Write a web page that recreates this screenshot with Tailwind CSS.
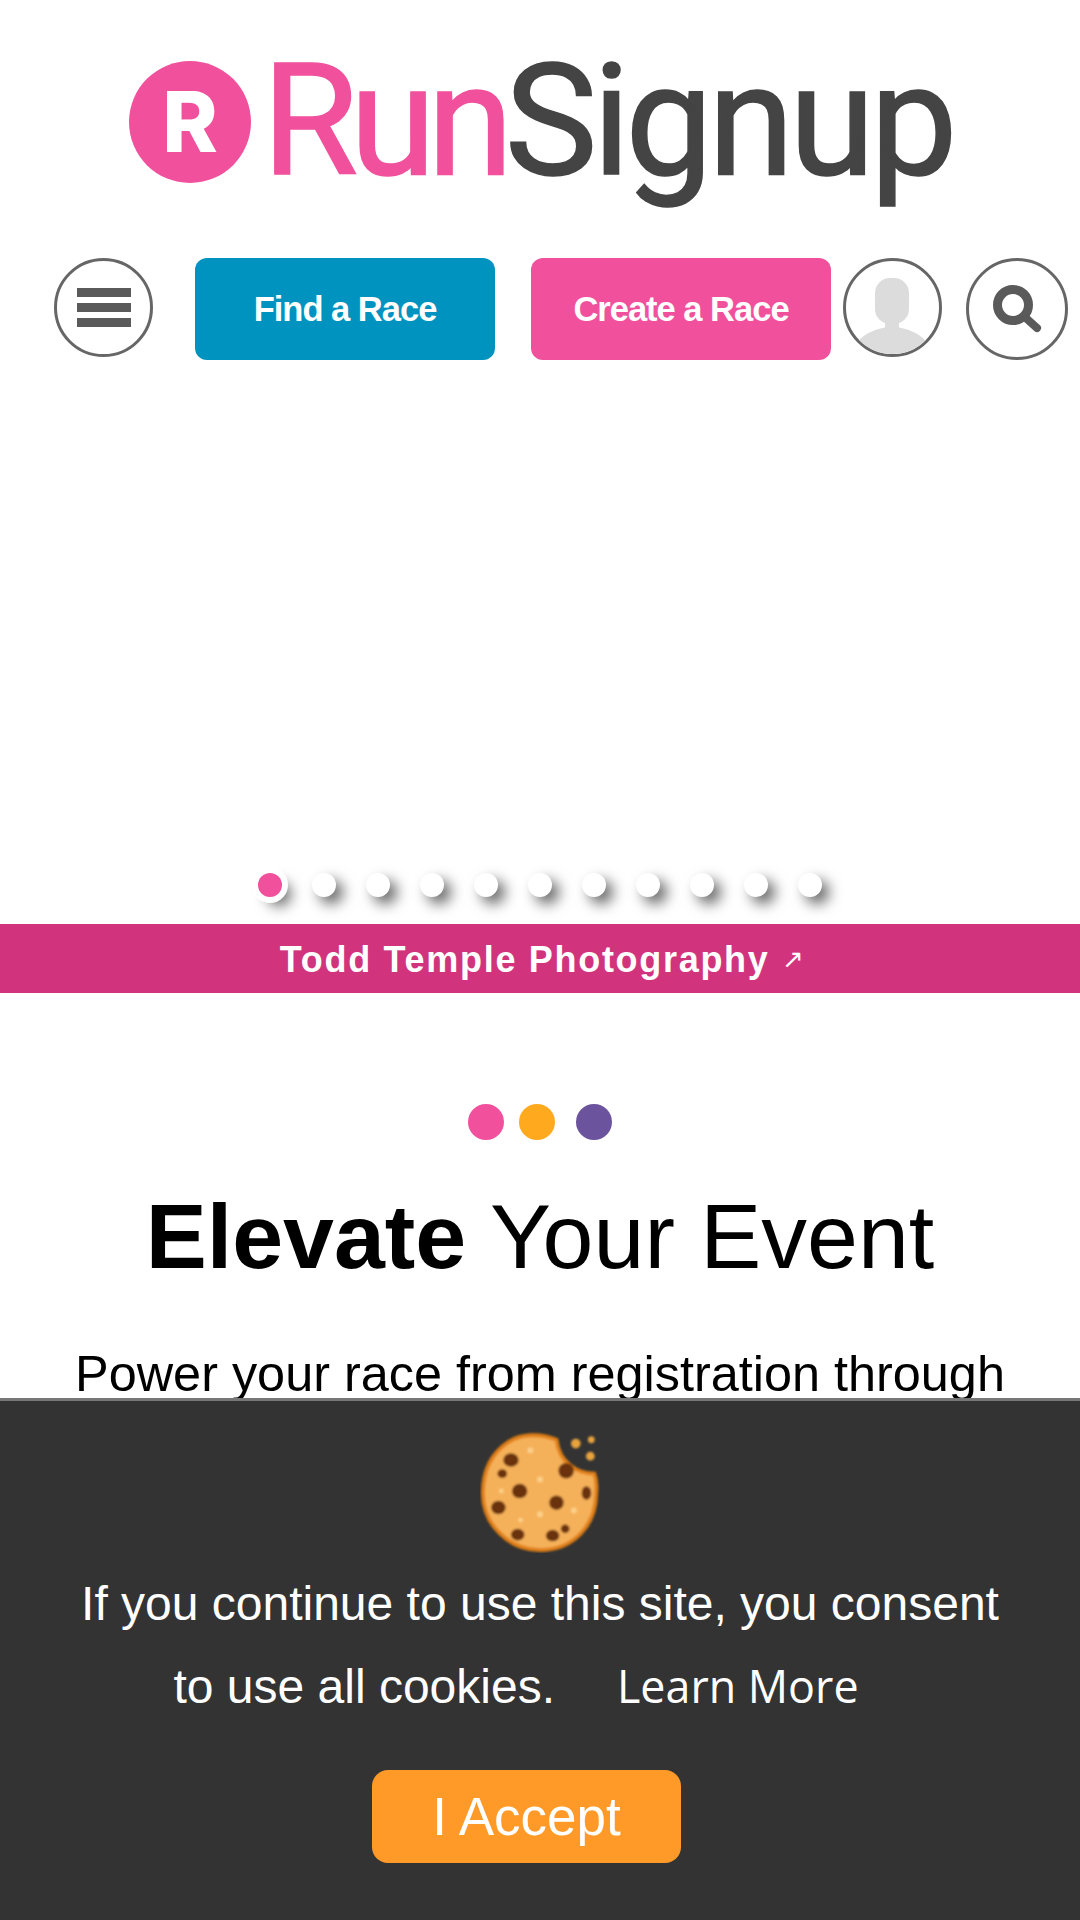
<!doctype html>
<html>
  <head>
    <meta charset="UTF-8" />
    <meta name="viewport" content="width=device-width, initial-scale=1.0" />
    <script src="https://cdn.jsdelivr.net/npm/@tailwindcss/browser@4"></script>
  </head>

  <body class="bg-white font-['Liberation_Sans',Arial,sans-serif]">
    <div class="relative h-[1920px] w-[1080px] overflow-hidden">
      <!-- Logo -->
      <div class="flex h-[258px] items-start pl-[129px] pt-[61px]">
        <div class="flex h-[122px] w-[122px] flex-none items-center justify-center rounded-full bg-[#f1519c]">
          <span class="font-['Inter',sans-serif] text-[84px] leading-none font-extrabold text-white">R</span>
        </div>
        <div class="mt-[-35px] ml-[11px] font-['Roboto',sans-serif] text-[156px] leading-[190px] font-normal [-webkit-text-stroke:1.5px]">
          <span class="tracking-[-8.5px] text-[#f1519c]">Run</span><span class="tracking-[-5px] text-[#444444]">Signup</span>
        </div>
      </div>

      <!-- Nav row -->
      <div class="flex h-[102px] items-start pl-[54px]">
        <button class="flex h-[99px] w-[99px] flex-none flex-col items-center justify-center gap-[6px] rounded-full border-[3px] border-[#666666]">
          <span class="h-[9px] w-[54px] bg-[#5a5a5a]"></span>
          <span class="h-[9px] w-[54px] bg-[#5a5a5a]"></span>
          <span class="h-[9px] w-[54px] bg-[#5a5a5a]"></span>
        </button>
        <button class="ml-[42px] h-[102px] w-[300px] flex-none rounded-[12px] bg-[#0093bf] pt-[2px] text-[34.5px] font-bold tracking-[-1px] text-white">Find a Race</button>
        <button class="ml-[36px] h-[102px] w-[300px] flex-none rounded-[12px] bg-[#f1519c] pt-[2px] text-[34.5px] font-bold tracking-[-1px] text-white">Create a Race</button>
        <button class="ml-[12px] h-[99px] w-[99px] flex-none overflow-hidden rounded-full border-[3px] border-[#666666]">
          <svg viewBox="0 0 93 93" class="h-full w-full">
            <rect x="29" y="17" width="34" height="46" rx="15" fill="#dcdcdc" />
            <rect x="39" y="58" width="14" height="12" fill="#dcdcdc" />
            <ellipse cx="46" cy="104" rx="44" ry="38" fill="#dcdcdc" />
          </svg>
        </button>
        <button class="ml-[24px] h-[102px] w-[102px] flex-none rounded-full border-[3px] border-[#666666]">
          <svg viewBox="0 0 96 96" class="h-full w-full">
            <circle cx="44" cy="44" r="15.5" fill="none" stroke="#5a5a5a" stroke-width="9" />
            <path d="M58 58 L68 67" stroke="#5a5a5a" stroke-width="8" stroke-linecap="round" />
          </svg>
        </button>
      </div>

      <!-- Slider dots -->
      <div class="flex h-[564px] items-end justify-center pb-[27px]">
        <div class="flex items-center gap-[30px]">
          <span class="h-[24px] w-[24px] rounded-full bg-[#f1519c] ring-[6px] ring-white shadow-[9px_9px_14px_rgba(0,0,0,0.6)]"></span>
          <span class="h-[24px] w-[24px] rounded-full bg-white shadow-[7px_7px_14px_rgba(0,0,0,0.6)]"></span>
          <span class="h-[24px] w-[24px] rounded-full bg-white shadow-[7px_7px_14px_rgba(0,0,0,0.6)]"></span>
          <span class="h-[24px] w-[24px] rounded-full bg-white shadow-[7px_7px_14px_rgba(0,0,0,0.6)]"></span>
          <span class="h-[24px] w-[24px] rounded-full bg-white shadow-[7px_7px_14px_rgba(0,0,0,0.6)]"></span>
          <span class="h-[24px] w-[24px] rounded-full bg-white shadow-[7px_7px_14px_rgba(0,0,0,0.6)]"></span>
          <span class="h-[24px] w-[24px] rounded-full bg-white shadow-[7px_7px_14px_rgba(0,0,0,0.6)]"></span>
          <span class="h-[24px] w-[24px] rounded-full bg-white shadow-[7px_7px_14px_rgba(0,0,0,0.6)]"></span>
          <span class="h-[24px] w-[24px] rounded-full bg-white shadow-[7px_7px_14px_rgba(0,0,0,0.6)]"></span>
          <span class="h-[24px] w-[24px] rounded-full bg-white shadow-[7px_7px_14px_rgba(0,0,0,0.6)]"></span>
          <span class="h-[24px] w-[24px] rounded-full bg-white shadow-[7px_7px_14px_rgba(0,0,0,0.6)]"></span>
        </div>
      </div>

      <!-- Photo credit -->
      <div class="flex h-[69px] items-center justify-center bg-[#d1347d] pt-[2px] pl-[5px] text-[36px] font-bold tracking-[1.7px] text-white">
        Todd Temple Photography<span class="ml-[12px] text-[26px] font-normal">↗</span>
      </div>

      <!-- Intro -->
      <div class="flex justify-center pt-[111px]">
        <span class="h-[36px] w-[36px] rounded-full bg-[#f1519c]"></span>
        <span class="ml-[15px] h-[36px] w-[36px] rounded-full bg-[#ffa91f]"></span>
        <span class="ml-[21px] h-[36px] w-[36px] rounded-full bg-[#6b539d]"></span>
      </div>
      <h1 class="mt-[41px] text-center text-[91.5px] leading-[110px] text-black"><b>Elevate</b> Your Event</h1>
      <p class="mt-[53px] text-center text-[50.4px] leading-[60px] text-black">Power your race from registration through</p>

      <!-- Cookie notice -->
      <div class="absolute inset-x-0 bottom-0 flex h-[522px] flex-col items-center border-t-[3px] border-[#777777] bg-[#333333]">
        <svg viewBox="-2 -2 124 126" class="mt-[30px] h-[122px] w-[120px]">
          <defs>
            <filter id="soft"><feGaussianBlur stdDeviation="0.9" /></filter>
          </defs>
          <g filter="url(#soft)">
            <path d="M77 7 C60 0 40 1 28 9 C8 22 1 42 1 62 C1 95 28 121 60 121 C95 121 118 95 118 62 C119 52 118 47 116 42 C100 42 80 32 77 7 Z" fill="#f5b15a" stroke="#e07f17" stroke-width="4" />
            <g fill="#fcd08a">
              <circle cx="50" cy="18" r="3" />
              <circle cx="20" cy="60" r="2.5" />
              <circle cx="60" cy="48" r="3" />
              <circle cx="60" cy="84" r="3" />
              <circle cx="40" cy="90" r="2.5" />
              <circle cx="95" cy="80" r="3" />
            </g>
            <g fill="#6b3307">
              <ellipse cx="30" cy="28" rx="8" ry="7" />
              <ellipse cx="21" cy="42" rx="5" ry="4.5" />
              <ellipse cx="39" cy="60" rx="8" ry="7.5" />
              <ellipse cx="17" cy="77" rx="7.5" ry="7" />
              <ellipse cx="77" cy="72" rx="7.5" ry="7.5" />
              <ellipse cx="87" cy="39" rx="8" ry="8" />
              <ellipse cx="108" cy="62" rx="5" ry="7" />
              <ellipse cx="37" cy="105" rx="7" ry="6" />
              <ellipse cx="73" cy="106" rx="7" ry="6" />
              <ellipse cx="86" cy="99" rx="4.5" ry="4.5" />
            </g>
            <circle cx="97" cy="11" r="5" fill="#e8a33e" />
            <circle cx="113" cy="7" r="3.5" fill="#e8a33e" />
            <circle cx="112" cy="24" r="4.5" fill="#e8a33e" />
          </g>
        </svg>
        <p class="mt-[10px] text-center text-[48px] leading-[82px] text-white">
          If you continue to use this site, you consent<br />
          to use all cookies.<a class="mr-[48px] ml-[62px] font-['Open_Sans',sans-serif] text-[44.8px] text-white">Learn More</a>
        </p>
        <button class="mt-[42px] mr-[27px] h-[93px] w-[309px] rounded-[16px] bg-[#ff9a28] text-[53px] text-white">I Accept</button>
      </div>
    </div>
  </body>
</html>
